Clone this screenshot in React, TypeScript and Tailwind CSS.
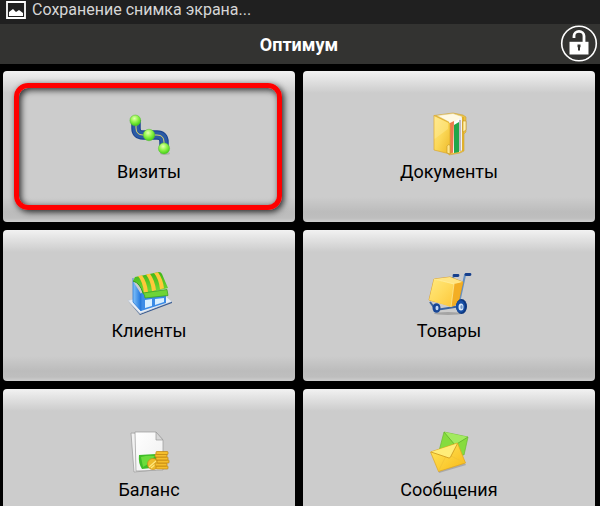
import type { ReactNode } from "react";

function RouteIcon() {
  return (
    <svg viewBox="0 0 48 48" className="size-12" aria-hidden="true">
      <defs>
        <radialGradient id="dot" cx="0.42" cy="0.32" r="0.65">
          <stop offset="0" stopColor="#e4ffb0" />
          <stop offset="0.5" stopColor="#93f54c" />
          <stop offset="1" stopColor="#48d31a" />
        </radialGradient>
      </defs>
      <ellipse cx="40" cy="43.5" rx="5" ry="1.4" fill="#999" opacity="0.5" />
      <path d="M11 10v8q0 7 7 7h14q7 0 7 7v6" fill="none" stroke="#1c4590" strokeWidth="9.5" />
      <path d="M11 10v8q0 7 7 7h14q7 0 7 7v6" fill="none" stroke="#2a5aa6" strokeWidth="7" />
      <path d="M11 10v8q0 7 7 7h14q7 0 7 7v6" fill="none" stroke="#d8d46c" strokeWidth="1" />
      <g fill="url(#dot)" stroke="#58b838" strokeWidth="0.5">
        <circle cx="10.3" cy="10.4" r="5.4" />
        <circle cx="24" cy="25" r="5.8" />
        <circle cx="39" cy="38.4" r="5.6" />
      </g>
    </svg>
  );
}

function FolderIcon() {
  return (
    <svg viewBox="0 0 48 48" className="size-12" aria-hidden="true">
      <defs>
        <linearGradient id="folder" x1="0" y1="0" x2="1" y2="1">
          <stop offset="0" stopColor="#ffe486" />
          <stop offset="0.5" stopColor="#fbd857" />
          <stop offset="1" stopColor="#edb828" />
        </linearGradient>
      </defs>
      <path d="M9 5.500 28 3l10 2 3 2v15l-2 2v17l-4 2-11 2Z" fill="#eac244" stroke="#cfa23a" strokeWidth="0.600" />
      <path d="m12 5.500 16-2 9 3v34H24V12Z" fill="#fff9e2" stroke="#d8c583" strokeWidth="0.500" />
      <path d="m25 13 4-2v31l-5 2Z" fill="#ee7b4c" />
      <path d="m29 12 5-3v32l-6 2Z" fill="#fff" />
      <path d="m29 15 5-3v30l-5 1Z" fill="#22a64a" />
      <path d="M34 8h3v32l-3 2Z" fill="#f4f2f4" />
      <path d="M35 10v31" stroke="#77616f" strokeWidth="0.800" />
      <path d="M38 7v34" stroke="#dfb02c" strokeWidth="2" />
      <path d="M38 11h3v9l-3 2Z" fill="#fff0ad" stroke="#c8962a" strokeWidth="0.600" />
      <path d="m9 5.500 14 6.500q2 1 2 3v29L9 40Z" fill="url(#folder)" stroke="#dba82d" strokeWidth="0.700" />
      <path d="M9.500 29 23 19v-6L9.500 6.500Z" fill="#fff0a5" opacity="0.350" />
      <path d="M22 36q1-2 3-1v9l-3-1Z" fill="#ffe58a" stroke="#c39620" strokeWidth="0.600" />
    </svg>
  );
}

function ShopIcon() {
  return (
    <svg viewBox="0 0 48 48" className="size-12" aria-hidden="true">
      <defs>
        <linearGradient id="wall" x1="0" x2="1">
          <stop offset="0" stopColor="#82c3fb" />
          <stop offset="1" stopColor="#1d74dc" />
        </linearGradient>
        <linearGradient id="awning" x1="0" y1="0" x2="0" y2="1">
          <stop offset="0" stopColor="#3fb516" />
          <stop offset="1" stopColor="#77dd3a" />
        </linearGradient>
      </defs>
      <path d="m3 32 12 14 32-12v-2L15 45Z" fill="#35588f" />
      <path d="M3 31.500 36 23l11 9.500-32 12Z" fill="#e8eef6" stroke="#b9c5d4" strokeWidth="0.500" />
      <path d="m8 12 8 13v17L8 33Z" fill="url(#wall)" />
      <path d="m16 24 25-3v13l-25 8Z" fill="#3b8be6" />
      <path d="m20 31 7-1v7l-7 2Zm10-1 9-1v4l-9 3Z" fill="#d8efff" />
      <path d="M8 9v24l8 9V25" fill="none" stroke="#2a79d6" strokeWidth="0.800" />
      <path d="m8 12 2-4 5-1 19-4q2 0 3 2l6 14-25 6q-2-11-10-13Z" fill="url(#awning)" />
      <path d="m13 7 4-.800q5 7 6 16.800l-4 1q-1-11-6-17Zm8-1.500 4-.800q5 7 6 16.500l-4 1q-1-10-6-16.700Zm8-1.500 4-.800q5 7 6 16l-4 1q-1-10-6-16.200Z" fill="#ffc83a" />
      <path d="m18 24 24-3.500 1 6L20 29q0-3-2-5Z" fill="#6ed437" stroke="#369f19" strokeWidth="0.700" />
      <path d="M8 12q7 2 10 12" fill="none" stroke="#2e9917" strokeWidth="1" />
    </svg>
  );
}

function CartIcon() {
  return (
    <svg viewBox="0 0 48 48" className="size-12" aria-hidden="true">
      <defs>
        <linearGradient id="box" x1="0" y1="0" x2="1" y2="1">
          <stop offset="0" stopColor="#ffe97e" />
          <stop offset="0.5" stopColor="#ffda5c" />
          <stop offset="1" stopColor="#fdc638" />
        </linearGradient>
      </defs>
      <ellipse cx="23" cy="44.5" rx="14" ry="1.4" fill="#888" opacity="0.6" />
      <path d="M45 6h-5l-6 28M33 7h-4l-3 5" fill="none" stroke="#6690c1" strokeWidth="2" />
      <path d="M45 5.500h-4M33 6.500h-4" stroke="#163f8c" strokeWidth="2.800" strokeLinecap="round" />
      <path d="m5 33 6 8 25-4" fill="none" stroke="#3b64a0" strokeWidth="2" />
      <ellipse cx="11.500" cy="39" rx="4" ry="4.800" fill="#174696" />
      <ellipse cx="12" cy="39" rx="1.500" ry="2.300" fill="#c3d8f5" />
      <path d="m9 10 16-2 13 5-5 22-6 2-23-6Z" fill="#efa71d" stroke="#d29420" strokeWidth="0.700" />
      <path d="m9 10 16-2 13 5-9 3Z" fill="#ffe584" />
      <path d="m9 10 20 5-3 23-22-7Z" fill="url(#box)" />
      <path d="m29 15 9-2-5 22-7 3Z" fill="#f3ae24" />
      <path d="m9 10 20 5-3 23" fill="none" stroke="#fff0a2" strokeWidth="0.700" />
      <ellipse cx="36.500" cy="37.500" rx="5.500" ry="7.500" fill="#0c377f" />
      <ellipse cx="35.500" cy="37.500" rx="4.500" ry="6.200" fill="#174fa6" />
      <ellipse cx="36" cy="38" rx="2.500" ry="3.500" fill="#d8e9fa" />
      <ellipse cx="36.500" cy="38" rx="1.200" ry="2" fill="#7599c6" />
    </svg>
  );
}

function BalanceIcon() {
  return (
    <svg viewBox="0 0 48 48" className="size-12" aria-hidden="true">
      <defs>
        <linearGradient id="sheet" x1="0" y1="0" x2="1" y2="1">
          <stop offset="0" stopColor="#fff" />
          <stop offset="1" stopColor="#efefef" />
        </linearGradient>
      </defs>
      <path d="m6 5 25 1v36L9 44Z" fill="#f2f2f2" stroke="#999" strokeWidth="0.700" />
      <path d="M10 4h21l7 8v30l-27 1Z" fill="url(#sheet)" stroke="#999" strokeWidth="0.700" />
      <path d="M31 4v8h7Z" fill="#d8d8d8" stroke="#999" strokeWidth="0.700" />
      <path d="m14 27 17-1 4 13-18 2q-4-6-3-14Z" fill="#3fbd28" />
      <path d="M16 29q7-2 14-1l-7 8-5 3Z" fill="#6bdc3c" />
      <circle cx="28" cy="36" r="5.500" fill="#edbb2b" stroke="#c98a14" strokeWidth="0.700" />
      <path d="m24 39 7-6M26 40l6-5" stroke="#ffe77d" strokeWidth="1.200" />
      <g fill="#f5be2c" stroke="#bd830f" strokeWidth="0.700">
        <rect x="31" y="38" width="12" height="3" rx="0.8" />
        <rect x="30" y="35" width="12" height="3" rx="0.8" />
        <rect x="32" y="32" width="12" height="3" rx="0.8" />
        <rect x="31" y="29" width="12" height="3" rx="0.8" />
        <rect x="30" y="26" width="12" height="3" rx="0.8" />
        <rect x="31" y="23.500" width="12" height="3" rx="0.8" />
      </g>
    </svg>
  );
}

function MailIcon() {
  return (
    <svg viewBox="0 0 48 48" className="size-12" aria-hidden="true">
      <defs>
        <linearGradient id="mail" x1="0" y1="0" x2="1" y2="1">
          <stop offset="0" stopColor="#ffe95f" />
          <stop offset="1" stopColor="#f9b916" />
        </linearGradient>
      </defs>
      <path d="m14 45 27-8-2-3-26 8Z" fill="#888" opacity="0.5" />
      <path d="m19 4 24 5-4 18-25-4Z" fill="#86dc3e" stroke="#6cba31" strokeWidth="0.700" />
      <path d="m19 4 11 13L43 9" fill="#a2ea60" stroke="#5fae2b" strokeWidth="0.800" />
      <path d="m5.500 24 27-9 8 20-27 8.500Z" fill="url(#mail)" stroke="#dfa51c" strokeWidth="0.700" />
      <path d="m13.500 43 7-14M40 35l-14-7" stroke="#f1c237" strokeWidth="0.700" />
      <path d="m6 24 18 6q1 0 1.500-1l7-13.500" fill="#ffed78" stroke="#cc951b" strokeWidth="0.800" />
    </svg>
  );
}

function Tile({ label, icon, marked }: { label: string; icon: ReactNode; marked?: boolean }) {
  return (
    <button
      type="button"
      className="relative flex h-[151px] flex-col items-center justify-center gap-0.5 rounded bg-[linear-gradient(#f2f2f2_0,#e2e2e2_9px,#cccccc_22px,#cccccc_126px,#bcbcbc_141px,#bebebe_147px,#cecece_151px)] text-lg leading-6 text-black"
    >
      {icon}
      <span>{label}</span>
      {marked && (
        <span className="absolute top-3 right-[13px] bottom-3 left-[11px] rounded-[14px] border-5 border-[#ff0000] shadow-[2px_2px_6px_rgba(0,0,0,0.8),inset_2px_2px_6px_rgba(0,0,0,0.8)]" />
      )}
    </button>
  );
}

export default function App() {
  return (
    <div className="flex h-screen flex-col overflow-hidden bg-black font-[Roboto,sans-serif]">
      <div className="flex h-6 shrink-0 items-center gap-1.5 bg-[#202020] pb-1 pl-1.5 text-base text-[#d6d6d6]">
        <svg viewBox="0 0 20 18" className="h-[18px] w-5" aria-hidden="true">
          <path d="M1 1h18v16H1Z" fill="#202020" stroke="#fff" strokeWidth="1.8" />
          <path d="M3 15v-4l4-3 3 3 3-2 4 3v3Z" fill="#fff" />
        </svg>
        <span>Сохранение снимка экрана...</span>
      </div>
      <header className="grid h-10 shrink-0 grid-cols-[1fr_auto_1fr] items-center bg-[#333331] pr-0.5 text-white">
        <h1 className="col-start-2 pt-0.5 text-lg font-bold">Оптимум</h1>
        <button type="button" aria-label="Разблокировать" className="justify-self-end">
          <svg viewBox="0 0 38 38" className="size-[38px]" aria-hidden="true">
            <circle cx="19" cy="18.5" r="17.3" fill="none" stroke="#fff" strokeWidth="1.6" />
            <path d="M14 13v-2a5 4.600 0 0 1 10 0V18" fill="none" stroke="#fff" strokeWidth="2.800" />
            <path d="M9.500 16.800h19v12.700h-19Z" fill="#fff" />
            <path d="M17.500 19.500h3V22l-.5.500v3h-2v-3l-.5-.5Z" fill="#333331" />
          </svg>
        </button>
      </header>
      <main className="grid grid-cols-2 gap-2 pt-[7px] pr-[5px] pl-[3px]">
        <Tile label="Визиты" icon={<RouteIcon />} marked />
        <Tile label="Документы" icon={<FolderIcon />} />
        <Tile label="Клиенты" icon={<ShopIcon />} />
        <Tile label="Товары" icon={<CartIcon />} />
        <Tile label="Баланс" icon={<BalanceIcon />} />
        <Tile label="Сообщения" icon={<MailIcon />} />
      </main>
    </div>
  );
}
